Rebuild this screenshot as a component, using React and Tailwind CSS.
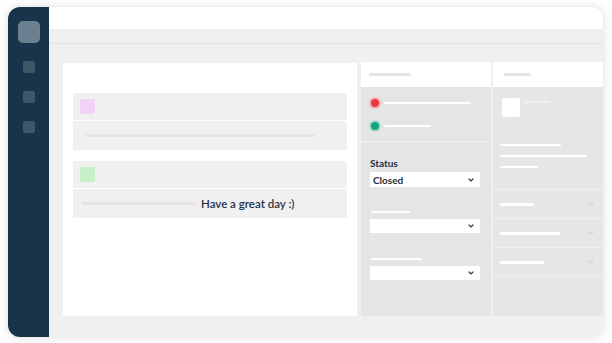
import React from "react";

const Chevron = ({ className = "" }) => (
  <svg width="6" height="4" viewBox="0 0 6 4" className={className}>
    <path d="M1 1 L3 3 L5 1" fill="none" stroke="currentColor" strokeWidth="1.2" strokeLinecap="round" />
  </svg>
);

const Select = ({ children, h = "h-[15px]" }) => (
  <div className={`flex ${h} w-[110px] items-center justify-between bg-white pl-[3px] pr-[6px]`}>
    <span className="text-[10px] font-bold leading-none text-[#1c2f42]">{children}</span>
    <Chevron className="text-[#2a3a4a]" />
  </div>
);

const Card = ({ swatch, children }) => (
  <div className="flex flex-col bg-[#f0f0f0]">
    <div className="flex h-[28px] items-center border-b border-white pl-[7px]">
      <div className={`h-[15px] w-[15px] rounded-[2px] ${swatch}`} />
    </div>
    <div className="flex h-[29px] items-center">{children}</div>
  </div>
);

const RightRow = ({ w }) => (
  <div className="flex h-[29px] items-center justify-between border-b border-[#efefef] pl-[7px] pr-[9px]">
    <div className={`h-[3px] rounded-full bg-white ${w}`} />
    <Chevron className="text-[#d0d0d0]" />
  </div>
);

export default function App() {
  return (
    <div className="h-[343px] w-[612px] bg-white pl-[8px] pt-[7px]" style={{ fontFamily: "Lato, 'Noto Sans', sans-serif" }}>
      <div className="flex h-[330px] w-[595px] overflow-hidden rounded-[12px] shadow-[0_0_8px_rgba(0,0,0,0.15)]">
        {/* sidebar */}
        <div className="flex w-[41px] flex-col items-center bg-[#18334a] pt-[14px]">
          <div className="h-[22px] w-[22px] rounded-[5px] bg-[#6b7f8f]" />
          <div className="mt-[18px] h-[12px] w-[12px] rounded-[2px] bg-[#3e5668]" />
          <div className="mt-[18px] h-[12px] w-[12px] rounded-[2px] bg-[#3e5668]" />
          <div className="mt-[18px] h-[12px] w-[12px] rounded-[2px] bg-[#3e5668]" />
        </div>

        <div className="flex flex-1 flex-col">
          <div className="h-[22px] bg-white" />
          <div className="h-[15px] border-b border-[#e4e4e4] bg-[#efefef]" />
          <div className="flex flex-1 bg-[#f0f0f0] pb-[21px] pl-[14px] pt-[18px]">
            {/* main panel */}
            <div className="mt-[1px] flex w-[294px] flex-col gap-[11px] bg-white px-[10px] pt-[30px]">
              <Card swatch="bg-[#f2d3f6]">
                <div className="ml-[13px] h-[3px] w-[229px] rounded-full bg-[#e3e3e3]" />
              </Card>
              <Card swatch="bg-[#c8f0c8]">
                <div className="ml-[9px] h-[3px] w-[114px] rounded-full bg-[#e3e3e3]" />
                <span className="ml-[5px] text-[11.5px] font-semibold leading-none text-[#1e3349]">Have a great day :)</span>
              </Card>
            </div>

            {/* middle panel */}
            <div className="ml-[4px] flex w-[130px] flex-col bg-[#e5e5e5]">
              <div className="flex h-[25px] items-center bg-white pl-[8px]">
                <div className="h-[3px] w-[42px] rounded-full bg-[#e3e3e3]" />
              </div>
              <div className="flex h-[55px] flex-col justify-center gap-[15px] border-b border-[#f2f2f2] pl-[10px]">
                <div className="flex items-center">
                  <div className="h-[8px] w-[8px] rounded-full bg-[#e8383d] ring-2 ring-[#f3b5b7]" />
                  <div className="ml-[5px] h-[2px] w-[87px] rounded-full bg-white" />
                </div>
                <div className="flex items-center">
                  <div className="h-[8px] w-[8px] rounded-full bg-[#14a37f] ring-2 ring-[#a9dccd]" />
                  <div className="ml-[5px] h-[2px] w-[47px] rounded-full bg-white" />
                </div>
              </div>
              <div className="flex flex-col pl-[9px] pt-[16px]">
                <span className="text-[10px] font-bold leading-none text-[#1c2f42]">Status</span>
                <div className="mt-[4px]">
                  <Select>Closed</Select>
                </div>
                <div className="ml-[1px] mt-[24px] h-[2px] w-[39px] rounded-full bg-white" />
                <div className="mt-[6px]">
                  <Select h="h-[14px]" />
                </div>
                <div className="ml-[1px] mt-[25px] h-[2px] w-[51px] rounded-full bg-white" />
                <div className="mt-[6px]">
                  <Select h="h-[14px]" />
                </div>
              </div>
            </div>

            {/* right panel */}
            <div className="ml-[2px] flex w-[110px] flex-col bg-[#e6e6e6]">
              <div className="flex h-[25px] items-center bg-white pl-[11px]">
                <div className="h-[3px] w-[27px] rounded-full bg-[#e3e3e3]" />
              </div>
              <div className="flex h-[103px] flex-col border-b border-[#efefef] px-[7px] pt-[11px]">
                <div className="flex items-start gap-[4px] pl-[2px]">
                  <div className="h-[19px] w-[18px] rounded-[2px] bg-white" />
                  <div className="mt-[3px] h-[2px] w-[26px] rounded-full bg-[#f0f0f0]" />
                </div>
                <div className="mt-[27px] h-[2px] w-[61px] rounded-full bg-white" />
                <div className="mt-[9px] h-[2px] w-[87px] rounded-full bg-white" />
                <div className="mt-[9px] h-[2px] w-[38px] rounded-full bg-white" />
              </div>
              <RightRow w="w-[34px]" />
              <RightRow w="w-[60px]" />
              <RightRow w="w-[44px]" />
            </div>
          </div>
        </div>
      </div>
    </div>
  );
}
